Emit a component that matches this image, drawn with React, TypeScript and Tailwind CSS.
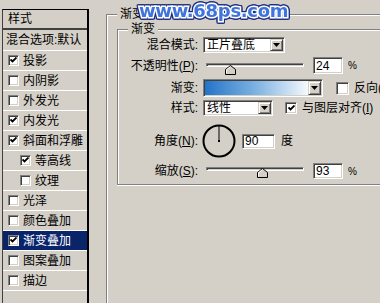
import React from 'react'

type Layer = { name: string; checked?: boolean; sub?: boolean; active?: boolean }

const layers: Layer[] = [
  { name: '投影', checked: true },
  { name: '内阴影' },
  { name: '外发光' },
  { name: '内发光', checked: true },
  { name: '斜面和浮雕', checked: true },
  { name: '等高线', checked: true, sub: true },
  { name: '纹理', sub: true },
  { name: '光泽' },
  { name: '颜色叠加' },
  { name: '渐变叠加', checked: true, active: true },
  { name: '图案叠加' },
  { name: '描边' },
]

const sunken =
  'border border-t-[#808080] border-l-[#808080] border-r-white border-b-white shadow-[inset_1px_1px_0_#404040,inset_-1px_-1px_0_#d4d0c8]'

const raised =
  'border border-t-[#d4d0c8] border-l-[#d4d0c8] border-r-[#404040] border-b-[#404040] shadow-[inset_1px_1px_0_#fff,inset_-1px_-1px_0_#808080] bg-[#d4d0c8]'

function CheckBox({ checked, size = 'w-[11px] h-[11px]' }: { checked?: boolean; size?: string }) {
  return (
    <span className={`${size} ${sunken} flex shrink-0 items-center justify-center bg-white`}>
      {checked && (
        <svg width="7" height="7" viewBox="0 0 7 7">
          <path d="M0.5 2.5 L2.5 4.5 L6.5 0.5" fill="none" stroke="#000" strokeWidth="1.8" />
        </svg>
      )}
    </span>
  )
}

function DropButton() {
  return (
    <span className={`${raised} flex h-full w-[13px] shrink-0 items-center justify-center`}>
      <svg width="7" height="4" viewBox="0 0 7 4">
        <polygon points="0,0 7,0 3.5,4" fill="#000" />
      </svg>
    </span>
  )
}

function Select({ value, width }: { value: string; width: string }) {
  return (
    <div className={`${width} ${sunken} flex h-full items-stretch bg-white p-[1px]`}>
      <span className="flex flex-1 items-center pl-[2px] leading-none">{value}</span>
      <DropButton />
    </div>
  )
}

function Slider({ value, trackTop, thumbTop }: { value: number; trackTop: string; thumbTop: string }) {
  return (
    <div className="relative ml-[3px] h-full w-[98px] shrink-0">
      <div className={`${trackTop} h-[4px] border border-t-[#808080] border-l-[#808080] border-r-white border-b-white shadow-[inset_1px_1px_0_#404040]`} />
      <svg
        width="11"
        height="10"
        viewBox="0 0 11 10"
        className={`absolute ${thumbTop}`}
        style={{ left: Math.round(value * 98) - 5 }}
      >
        <path d="M0.5 9.5 V4.5 L5.5 0.5 L10.5 4.5 V9.5 Z" fill="#d4d0c8" stroke="#000" />
        <path d="M1.5 8.5 V4.8 L5.5 1.6" fill="none" stroke="#fff" />
      </svg>
    </div>
  )
}

function NumBox({ value, width, height }: { value: string; width: string; height: string }) {
  return (
    <div className={`${width} ${height} ${sunken} flex items-center bg-white pl-[2px] leading-none`}>{value}</div>
  )
}

function Row({ label, className, children }: { label: React.ReactNode; className: string; children: React.ReactNode }) {
  return (
    <div className={`flex items-center ${className}`}>
      <span className="w-[80px] shrink-0 text-right leading-none">{label}</span>
      <div className="ml-[5px] flex h-full items-center">{children}</div>
    </div>
  )
}

export default function App() {
  return (
    <div className="relative flex h-[303px] w-[380px] overflow-hidden bg-[#d4d0c8] font-['Liberation_Sans','Noto_Sans_CJK_SC',sans-serif] text-[12px] text-black">
      {/* style list */}
      <div className="mt-[9px] ml-[2px] h-[300px] w-[87px] shrink-0 border-t border-l border-r-2 border-t-black border-l-[#404040] border-r-black">
        <div className="flex h-[18px] items-center pl-[5px]">样式</div>
        <div className="h-[2px] bg-[#404040]" />
        <div className="flex h-[21px] items-center border-b border-white pl-[3px] whitespace-nowrap">混合选项:默认</div>
        {layers.map((l) => (
          <div
            key={l.name}
            className={`flex h-[20px] items-center gap-[4px] border-b border-white ${l.sub ? 'pl-[17px]' : 'pl-[5px]'} ${
              l.active ? 'bg-[#0a246a] text-white' : ''
            }`}
          >
            <CheckBox checked={l.checked} />
            <span className="whitespace-nowrap">{l.name}</span>
          </div>
        ))}
      </div>

      {/* gradient overlay settings */}
      <fieldset className="mt-[7px] ml-[17px] h-[320px] w-[300px] shrink-0 border border-[#808080] shadow-[inset_1px_1px_0_#fff]">
        <legend className="ml-[10px] h-[14px] bg-[#d4d0c8] px-[3px] leading-[14px]">渐变叠加</legend>
        <fieldset className="mt-[1px] ml-[10px] w-[290px] border border-[#808080] pb-[5px] shadow-[inset_1px_1px_0_#fff,0_1px_0_#fff]">
          <legend className="ml-[10px] h-[14px] bg-[#d4d0c8] px-[3px] leading-[14px]">渐变</legend>

          <Row label="混合模式:" className="mt-[1px] h-[16px]">
            <Select value="正片叠底" width="w-[82px]" />
          </Row>

          <Row
            label={
              <>
                不透明性(<u>P</u>):
              </>
            }
            className="mt-[4px] h-[17px]"
          >
            <Slider value={0.24} trackTop="mt-[6px]" thumbTop="top-[8px]" />
            <div className="ml-[9px]">
              <NumBox value="24" width="w-[30px]" height="h-[17px]" />
            </div>
            <span className="ml-[5px] text-[10px]">%</span>
          </Row>

          <Row label="渐变:" className="mt-[5px] h-[18px]">
            <div className={`w-[120px] ${sunken} flex h-full items-stretch bg-white p-[1px]`}>
              <div className="flex-1 bg-gradient-to-r from-[#1f74c8] via-[#7fb3e2] to-[#f6f9fd]" />
              <DropButton />
            </div>
            <div className="ml-[13px]">
              <CheckBox size="w-[13px] h-[13px]" />
            </div>
            <span className="ml-[5px] whitespace-nowrap">
              反向(<u>R</u>)
            </span>
          </Row>

          <Row label="样式:" className="mt-[3px] h-[16px]">
            <Select value="线性" width="w-[70px]" />
            <div className="ml-[12px]">
              <CheckBox checked size="w-[12px] h-[12px]" />
            </div>
            <span className="ml-[5px] whitespace-nowrap">
              与图层对齐(<u>I</u>)
            </span>
          </Row>

          <Row
            label={
              <>
                角度(<u>N</u>):
              </>
            }
            className="mt-[9px] h-[32px]"
          >
            <svg width="34" height="34" viewBox="0 0 34 34" className="-ml-[1px]">
              <circle cx="17" cy="17" r="15.5" fill="none" stroke="#000" strokeWidth="2" />
              <line x1="17" y1="17" x2="17" y2="2" stroke="#000" strokeWidth="1" />
              <rect x="16" y="16" width="2" height="2" fill="#000" />
            </svg>
            <div className="ml-[6px]">
              <NumBox value="90" width="w-[33px]" height="h-[15px]" />
            </div>
            <span className="ml-[6px]">度</span>
          </Row>

          <Row
            label={
              <>
                缩放(<u>S</u>):
              </>
            }
            className="mt-[6px] h-[16px]"
          >
            <Slider value={0.57} trackTop="mt-[4px]" thumbTop="top-[5px]" />
            <div className="ml-[9px]">
              <NumBox value="93" width="w-[30px]" height="h-[16px]" />
            </div>
            <span className="ml-[5px] text-[10px]">%</span>
          </Row>
        </fieldset>
      </fieldset>

      {/* watermark */}
      <span className="absolute top-[1px] left-[139px] font-['DejaVu_Sans',sans-serif] text-[18px] leading-[20px] font-bold tracking-[-0.3px] text-[#3f74dc] [paint-order:stroke_fill] [-webkit-text-stroke:3px_#fff] [filter:drop-shadow(1px_0_0_#1c2c80)_drop-shadow(-1px_0_0_#1c2c80)_drop-shadow(0_1px_0_#1c2c80)_drop-shadow(0_-1px_0_#1c2c80)]">
        www.68ps.com
      </span>
    </div>
  )
}
